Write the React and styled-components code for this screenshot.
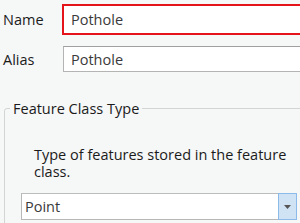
import React from "react";
import styled, { createGlobalStyle } from "styled-components";

const Global = createGlobalStyle`
  html, body { margin: 0; padding: 0; background: #f6f7f7; overflow: hidden; }
  body { font-family: "Open Sans", "Noto Sans", sans-serif; }
`;

const Page = styled.div`
  width: 300px;
  height: 223px;
  overflow: hidden;
  background: #f6f7f7;
`;

const Form = styled.div`
  display: flex;
  flex-direction: column;
  padding: 4px 0 0 3px;
  width: 360px;
`;

const Row = styled.div`
  display: flex;
  align-items: center;
  height: ${(p) => p.$h}px;
  margin-bottom: ${(p) => p.$mb}px;
`;

const Label = styled.div`
  width: ${(p) => p.$w}px;
  font-size: 14.5px;
  color: #1b1b1b;
`;

const Input = styled.div`
  box-sizing: border-box;
  width: 280px;
  height: ${(p) => p.$h}px;
  background: #fff;
  border: ${(p) => (p.$focus ? "2px solid #e5141b" : "1px solid #b4b4b4")};
  border-top-color: ${(p) => (p.$focus ? "#e5141b" : "#a0a0a0")};
  padding-left: 7px;
  display: flex;
  align-items: center;
  font-size: 14.5px;
  color: #3a3a3a;
`;

const Group = styled.fieldset`
  margin: 0 0 0 1px;
  padding: 0 0 0 16px;
  border: 1px solid #d4d4d4;
  border-radius: 3px;
  width: 340px;
  box-sizing: border-box;
  min-height: 140px;
`;

const Legend = styled.legend`
  font-size: 14.5px;
  color: #1b1b1b;
  padding: 0 3px;
  margin-left: -11px;
`;

const Desc = styled.div`
  font-size: 14.5px;
  line-height: 17px;
  color: #1b1b1b;
  width: 258px;
  margin: 28px 0 13px 13px;
`;

const Select = styled.div`
  box-sizing: border-box;
  width: 276px;
  height: 27px;
  background: #fff;
  border: 1px solid #b8b8b8;
  border-top-color: #bcbcbc;
  display: flex;
  align-items: stretch;
  font-size: 14.5px;
  color: #3a3a3a;
`;

const SelectText = styled.div`
  flex: 1;
  display: flex;
  align-items: center;
  padding-left: 3px;
`;

const SelectButton = styled.div`
  width: 17px;
  margin: -1px -1px -1px 0;
  background: #cfe3f5;
  border: 1px solid #8cbbe9;
  display: flex;
  align-items: center;
  justify-content: center;
`;

export default function App() {
  return (
    <Page>
      <Global />
      <Form>
        <Row $h={31} $mb={11}>
          <Label $w={59}>Name</Label>
          <Input $h={31} $focus>Pothole</Input>
        </Row>
        <Row $h={26} $mb={27}>
          <Label $w={60}>Alias</Label>
          <Input $h={26}>Pothole</Input>
        </Row>
        <Group>
          <Legend>Feature Class Type</Legend>
          <Desc>Type of features stored in the feature class.</Desc>
          <Select>
            <SelectText>Point</SelectText>
            <SelectButton>
              <svg width="7" height="4" viewBox="0 0 7 4">
                <path d="M0 0h7L3.5 4z" fill="#555" />
              </svg>
            </SelectButton>
          </Select>
        </Group>
      </Form>
    </Page>
  );
}
